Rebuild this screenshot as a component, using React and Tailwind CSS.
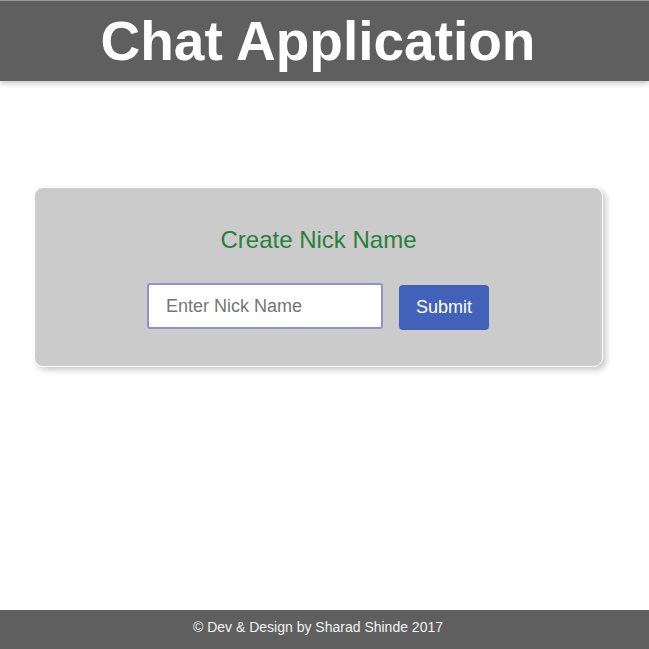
export default function App() {
  return (
    <div className="min-h-[649px] w-[649px] flex flex-col bg-white" style={{ fontFamily: '"Liberation Sans", Arial, sans-serif' }}>
      <header className="h-[81px] bg-[#5f5f5f] border-t border-[#9a9a9a] shadow-[0_2px_6px_rgba(0,0,0,0.25)] flex items-center justify-center pr-[13px]">
        <h1 className="text-[55px] font-bold text-white leading-none mt-[1px]">Chat Application</h1>
      </header>
      <main className="flex-1 pl-[34px] pr-[46px] pt-[106px]">
        <div className="h-[180px] bg-[#cbcbcb] rounded-[9px] border border-white shadow-[3px_3px_6px_rgba(0,0,0,0.22)] flex flex-col items-center pt-[40px]">
          <h2 className="text-[24px] text-[#2a7f3b] leading-none">Create Nick Name</h2>
          <div className="flex items-center gap-[16px] mt-[30px] ml-[-1px]">
            <input
              type="text"
              placeholder="Enter Nick Name"
              className="w-[236px] h-[46px] bg-white border-2 border-[#8e91d2] rounded-[3px] px-[17px] text-[18px] text-[#444] placeholder:text-[#757575] outline-none"
              style={{ fontFamily: '"Liberation Sans", Arial, sans-serif' }}
            />
            <button className="w-[90px] h-[45px] bg-[#4262b9] rounded-[4px] text-white text-[18px] mt-[3px]" style={{ fontFamily: '"Liberation Sans", Arial, sans-serif' }}>
              Submit
            </button>
          </div>
        </div>
      </main>
      <footer className="h-[39px] bg-[#5f5f5f] flex items-center justify-center pr-[13px] pb-[4px]">
        <p className="text-[14px] text-[#f2f2f2]">© Dev &amp; Design by Sharad Shinde 2017</p>
      </footer>
    </div>
  );
}
